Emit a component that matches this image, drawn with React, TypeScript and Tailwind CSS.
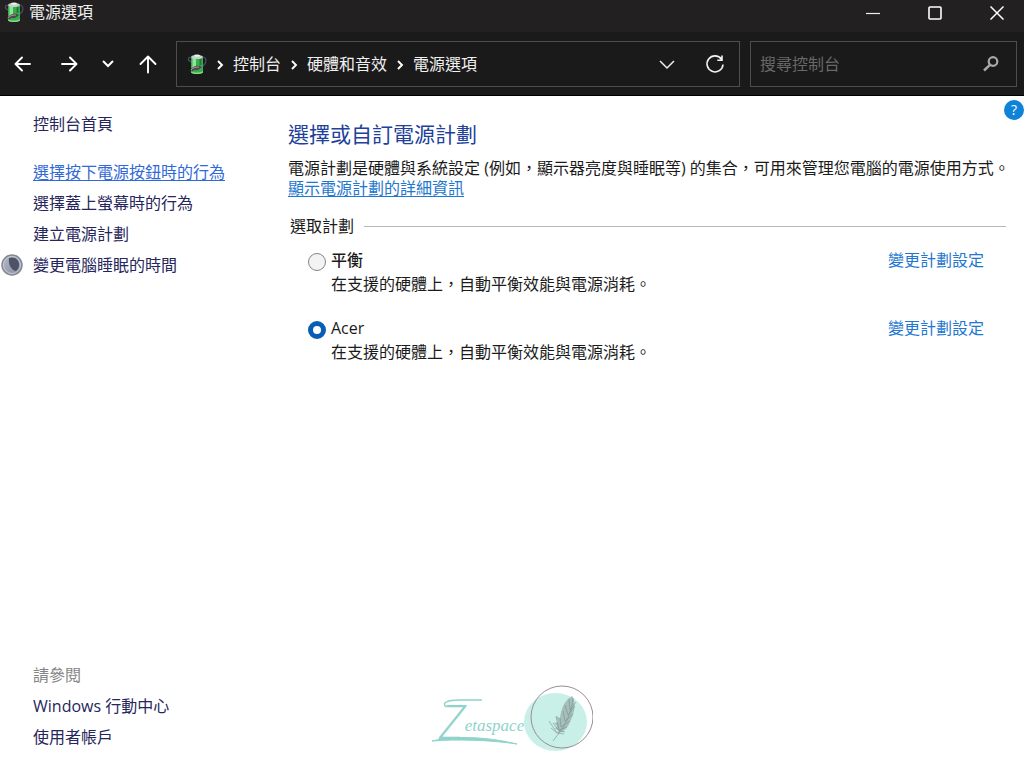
import { useState } from "react";

const plans = [
  { id: "balanced", name: "平衡", active: true },
  { id: "acer", name: "Acer", active: false },
];

const tasks = [
  { text: "選擇按下電源按鈕時的行為", hot: true },
  { text: "選擇蓋上螢幕時的行為" },
  { text: "建立電源計劃" },
  { text: "變更電腦睡眠的時間", icon: true },
];

function BatteryIcon() {
  return (
    <svg width="20" height="22" viewBox="0 0 20 22" aria-hidden="true" className="shrink-0">
      <path d="M4 5C1 3 0 7 4 9M16 4c4 1 4 6 0 9" fill="none" stroke="#4d4c68" strokeWidth="1.200" />
      <path d="M4 4.500h12V19c0 2.300-12 2.300-12 0z" fill="#39ad4d" />
      <path d="M5.500 5h3.500v12l-3.500 1z" fill="#8ee69a" />
      <path d="M12.500 5h2v7h-2z" fill="#207c34" />
      <ellipse cx="10" cy="4" rx="6" ry="2" fill="#c5d2ca" />
      <ellipse cx="10" cy="2.600" rx="3" ry="1.200" fill="#f0f3f1" />
      <path d="M4 18c3 2 9 2 12 0v1.500c-2 2-10 2-12 0z" fill="#7ddf80" />
      <path d="M3 17.500c2-3.500 5-5 9-5l3 1.500c-2 2.500-5 3.500-8 3.500l-2 1z" fill="#4b4a52" />
      <path d="M4 17c2-2.500 5-3 8-3" fill="none" stroke="#b69b90" strokeWidth="1" />
    </svg>
  );
}

function SleepIcon() {
  return (
    <svg width="22" height="22" viewBox="0 0 22 22" aria-hidden="true">
      <defs>
        <linearGradient id="sleepFace" x1="0" y1="0" x2="1" y2="1">
          <stop offset="0" stopColor="#b4bacb" />
          <stop offset="1" stopColor="#858b9c" />
        </linearGradient>
      </defs>
      <circle cx="11" cy="11" r="10" fill="url(#sleepFace)" stroke="#858994" strokeWidth="1.500" />
      <circle cx="11" cy="11" r="8.500" fill="none" stroke="#c6cad6" strokeWidth="1" />
      <path d="M8 4c5-2 10 1 10 6.500 0 3-1 5-3 6.500-5-1-8-7-7-13z" fill="#4d5364" />
    </svg>
  );
}

function Crumb() {
  return (
    <svg width="26" height="12" viewBox="0 0 26 12" aria-hidden="true" className="mt-0.5 shrink-0">
      <path d="M11 2l4 4-4 4" fill="none" stroke="#fff" strokeWidth="1.900" />
    </svg>
  );
}

function Chevron({ wide = false }: { wide?: boolean }) {
  return wide ? (
    <svg width="18" height="12" viewBox="0 0 18 12" aria-hidden="true">
      <path d="M2 3l7 7 7-7" fill="none" stroke="#eee" strokeWidth="1.500" />
    </svg>
  ) : (
    <svg width="14" height="10" viewBox="0 0 14 10" aria-hidden="true">
      <path d="M2 2l5 5 5-5" fill="none" stroke="#fff" strokeWidth="2" />
    </svg>
  );
}

function Arrow({ d }: { d: string }) {
  return (
    <svg width="20" height="20" viewBox="0 0 20 20" aria-hidden="true">
      <path d={d} fill="none" stroke="#fff" strokeWidth="1.900" strokeLinecap="round" strokeLinejoin="round" />
    </svg>
  );
}

function Watermark() {
  return (
    <svg width="162" height="72" viewBox="0 0 162 72" role="img" aria-label="Zetaspace">
      <path d="M15 22c-5-5 3-7 13-7h23" fill="none" stroke="#8fd3cb" strokeWidth="1.500" />
      <path d="M1 56c20-5 52-5 85 3C60 55 25 54 1 56z" fill="#8fd3cb" stroke="#8fd3cb" strokeWidth="1" />
      <ellipse cx="124.500" cy="37" rx="31.500" ry="29" fill="#c9efe9" />
      <circle cx="131" cy="32" r="31" fill="none" stroke="#9c8d92" strokeWidth="1" />
      <text x="8" y="54" fill="#8fd3cb" fontStyle="italic" fontFamily="Open Sans, sans-serif" fontWeight="300" fontSize="48">
        Z<tspan dy="-8" fontFamily="Liberation Serif, serif" fontWeight="400" fontSize="17">etaspace</tspan>
      </text>
      <path d="M141 11c-7 4-11 12-12 22l-4-2 2 6-4 1 3 3-2 3 4 1-2 3 5-1c3-2 6-5 8-10 4-7 7-20 2-26z" fill="#a5bfbb" />
      <path d="M142 13c-1 11-5 22-11 31l-9 12M129 33l1 9 9-6M125 31l3 14 8-3M122 38l6 8 6 1M118 36l8 12M132 26l2 10 8-7M134 20l3 10 7-9M138 14l1 11 6-8M120 43l6 5 7 1" fill="none" stroke="#7a908d" strokeWidth=".6" />
    </svg>
  );
}

export default function App() {
  const [selected, setSelected] = useState("acer");
  return (
    <div className="flex min-h-screen flex-col bg-white font-['Open_Sans','Noto_Sans_CJK_TC',sans-serif] text-base text-[#1b1b1b]">
      <header className="bg-[#1a1a1a] text-[#f0f0f0]">
        <div className="flex h-8 items-start justify-between bg-[#222021] pl-1">
          <div className="flex items-center gap-[5px] leading-6">
            <BatteryIcon />
            <h1>電源選項</h1>
          </div>
          <div className="flex gap-2">
            <button aria-label="最小化" className="flex h-[26px] w-[54px] items-center justify-center">
              <svg width="14" height="14" viewBox="0 0 14 14"><path d="M0 7.500h14" stroke="#eee" strokeWidth="1.200" /></svg>
            </button>
            <button aria-label="最大化" className="flex h-[26px] w-[54px] items-center justify-center">
              <svg width="14" height="14" viewBox="0 0 14 14"><rect x="1" y="1" width="12" height="12" rx="1" fill="none" stroke="#fff" strokeWidth="1.600" /></svg>
            </button>
            <button aria-label="關閉" className="flex h-[26px] w-[54px] items-center justify-center">
              <svg width="14" height="14" viewBox="0 0 14 14"><path d="M.5.5l13 13M13.500.5l-13 13" stroke="#fff" strokeWidth="1.500" /></svg>
            </button>
          </div>
        </div>
        <div className="flex h-16 items-center border-b border-black pr-[7px]">
          <nav aria-label="瀏覽" className="mr-1 flex shrink-0">
            <button aria-label="上一頁" className="flex h-10 w-[46px] items-center justify-center"><Arrow d="M17 10H3M9 3.500L2.500 10 9 16.500" /></button>
            <button aria-label="下一頁" className="flex h-10 w-[46px] items-center justify-center"><Arrow d="M3 10h14M11 3.500l6.500 6.500-6.500 6.500" /></button>
            <button aria-label="最近的位置" className="flex h-10 w-8 items-center justify-center"><Chevron /></button>
            <button aria-label="上一層" className="flex h-10 w-12 items-center justify-center"><Arrow d="M10 18.500V3M2.500 10L10 2.500l7.500 7.500" /></button>
          </nav>
          <div className="flex h-[46px] flex-1 items-center border border-[#4d4d4d] pl-2.5">
            <BatteryIcon />
            <Crumb />
            <a href="#control-panel">控制台</a>
            <Crumb />
            <a href="#hardware">硬體和音效</a>
            <Crumb />
            <a href="#power">電源選項</a>
            <button aria-label="先前的位置" className="ml-auto flex h-10 w-12 items-center justify-center"><Chevron wide /></button>
            <button aria-label="重新整理" className="flex h-10 w-12 items-center justify-center">
              <svg width="20" height="20" viewBox="0 0 20 20"><path d="M16.500 5.200A8 8 0 1 0 18 10.500M17 1.500v4.700h-4.700" fill="none" stroke="#f2f2f2" strokeWidth="1.600" /></svg>
            </button>
          </div>
          <form role="search" className="ml-2.5 flex h-[46px] w-[267px] items-center border border-[#4d4d4d] pr-4 pl-[9px]">
            <input type="search" aria-label="搜尋控制台" placeholder="搜尋控制台" className="min-w-0 flex-1 bg-transparent outline-none placeholder:text-[#686868]" />
            <button type="button" aria-label="搜尋">
              <svg width="18" height="18" viewBox="0 0 18 18"><circle cx="11" cy="6.500" r="4.300" fill="none" stroke="#a8a8a8" strokeWidth="2.200" /><path d="M8 9.800L2 15.500" stroke="#a8a8a8" strokeWidth="2.500" /></svg>
            </button>
          </form>
        </div>
      </header>

      <div className="relative flex flex-1">
        <aside className="flex w-72 shrink-0 flex-col justify-between pt-4 pb-3 leading-6 text-[#26265c]">
          <nav aria-label="工作">
            <a href="#home" className="ml-[33px]">控制台首頁</a>
            <ul className="mt-6 flex flex-col gap-[7px]">
              {tasks.map((task) => (
                <li key={task.text} className="flex items-center">
                  <span className="w-[33px] pl-px">{task.icon && <SleepIcon />}</span>
                  <a href="#task" className={task.hot ? "text-[#3069d8] underline underline-offset-2" : ""}>{task.text}</a>
                </li>
              ))}
            </ul>
          </nav>
          <nav aria-label="請參閱" className="flex flex-col items-start gap-[7px] pl-[33px]">
            <h2 className="text-[#858585]">請參閱</h2>
            <a href="#mobility">Windows 行動中心</a>
            <a href="#accounts">使用者帳戶</a>
          </nav>
        </aside>

        <main className="min-w-0 flex-1 pt-6">
          <h2 className="text-[21px] leading-7 text-[#21409a]">選擇或自訂電源計劃</h2>
          <p className="mt-2.5 leading-5">電源計劃是硬體與系統設定 (例如，顯示器亮度與睡眠等) 的集合，可用來管理您電腦的電源使用方式。</p>
          <a href="#details" className="block w-fit leading-5 text-[#2277d0] underline underline-offset-2">顯示電源計劃的詳細資訊</a>
          <section role="radiogroup" aria-labelledby="plan-heading" className="mt-4 pr-[18px]">
            <div className="flex items-center gap-2.5 pl-0.5 leading-6">
              <h3 id="plan-heading">選取計劃</h3>
              <span className="h-px flex-1 bg-[#b8b8b8]" />
            </div>
            <div className="mt-2.5 flex flex-col gap-5 pl-5">
              {plans.map((plan) => (
                <div key={plan.id} className="flex items-start justify-between pr-[22px] leading-6">
                  <div className="flex items-start gap-[5px]">
                    <input
                      type="radio"
                      name="plan"
                      id={plan.id}
                      checked={selected === plan.id}
                      onChange={() => setSelected(plan.id)}
                      className="mt-[5px] size-[18px] shrink-0 appearance-none rounded-full border border-[#858585] bg-[#f3f3f3] checked:border-[5px] checked:border-[#075fb5] checked:bg-white"
                    />
                    <div>
                      <label htmlFor={plan.id} className={plan.active ? "block font-medium" : "block"}>{plan.name}</label>
                      <p>在支援的硬體上，自動平衡效能與電源消耗。</p>
                    </div>
                  </div>
                  <a href="#change" className="text-[#2277d0]">變更計劃設定</a>
                </div>
              ))}
            </div>
          </section>
        </main>

        <button aria-label="說明" className="absolute top-1 right-0 flex size-5 items-center justify-center rounded-full bg-[#0f83d8] text-sm leading-5 text-white">?</button>
        <div className="pointer-events-none absolute inset-x-0 bottom-1 flex justify-center">
          <Watermark />
        </div>
      </div>
    </div>
  );
}
